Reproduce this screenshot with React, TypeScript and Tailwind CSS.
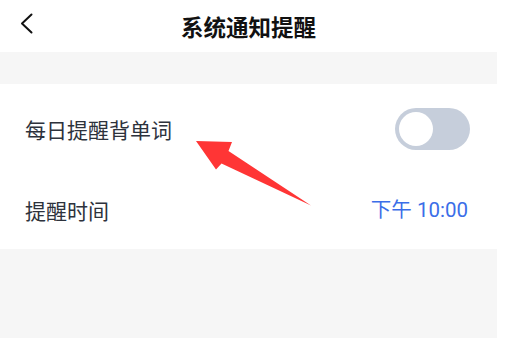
export default function App() {
  return (
    <div
      className="relative w-[505px] h-[338px] bg-white overflow-hidden"
      style={{ fontFamily: '"Noto Sans CJK SC", "Noto Sans", sans-serif' }}
    >
      <div className="w-[497px] flex flex-col">
        {/* header */}
        <div className="relative h-[52px] flex items-center justify-center bg-white">
          <svg
            className="absolute left-[18px] top-[12px]"
            width="18"
            height="24"
            viewBox="0 0 18 24"
            fill="none"
          >
            <path d="M13.5 2.5L4 11.5L13.5 20.5" stroke="#111" strokeWidth="2" strokeLinecap="round" strokeLinejoin="round" />
          </svg>
          <span className="text-[22.5px] font-bold text-[#111] leading-none">系统通知提醒</span>
        </div>
        {/* gray band */}
        <div className="h-[32px] bg-[#f6f6f6]" />
        {/* row 1 */}
        <div className="h-[90px] flex items-center justify-between pl-[25px] pr-[27px] bg-white">
          <span className="text-[21px] text-[#2d323c] leading-none">每日提醒背单词</span>
          <div className="w-[75px] h-[42px] rounded-full bg-[#c6cedb] flex items-center pl-[4px]">
            <div className="w-[34px] h-[34px] rounded-full bg-white" />
          </div>
        </div>
        {/* row 2 */}
        <div className="h-[75px] flex items-center justify-between pl-[25px] pr-[29px] pb-[3px] bg-white">
          <span className="text-[21px] text-[#2d323c] leading-none">提醒时间</span>
          <span
            className="text-[20.5px] text-[#3b6ee8] leading-none"
            style={{ fontFamily: 'Roboto, "Noto Sans CJK SC", sans-serif' }}
          >
            下午 10:00
          </span>
        </div>
        {/* bottom gray */}
        <div className="h-[89px] bg-[#f6f6f6]" />
      </div>
      {/* annotation arrow */}
      <svg className="absolute left-0 top-0" width="505" height="338" viewBox="0 0 505 338">
        <polygon
          points="196,141 232,142 228.5,151 311,205.5 221.5,163.5 216,169.5"
          fill="#ff3535"
        />
      </svg>
    </div>
  );
}
